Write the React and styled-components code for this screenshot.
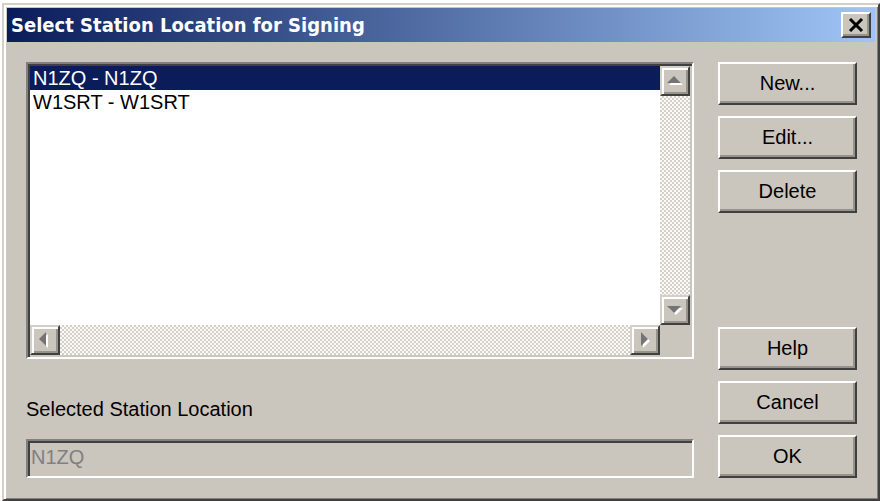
import React, { useState } from "react";
import styled, { createGlobalStyle } from "styled-components";

const Global = createGlobalStyle`
  *, *::before, *::after { box-sizing: border-box; }
  body { margin: 0; background: #fff; }
  button, input { font: inherit; color: inherit; }
`;

const face = "#cac5bd";
const sans = `"Liberation Sans", Arial, sans-serif`;

const Page = styled.div`
  min-height: 100vh;
  padding: 3px 0 0 2px;
  display: flex;
  font-family: ${sans};
  font-size: 20px;
  line-height: 24px;
  color: #000;
`;

const Dialog = styled.main`
  flex: 1;
  display: flex;
  flex-direction: column;
  padding: 3px;
  background: ${face};
  border: 2px solid;
  border-color: #d4d0c8 #404040 #404040 #d4d0c8;
  box-shadow: inset 2px 2px #fff, inset -1px -1px #808080;
`;

const TitleBar = styled.header`
  display: flex;
  align-items: center;
  justify-content: space-between;
  height: 34px;
  padding: 0 4px;
  background: linear-gradient(90deg, #0a1c5a, #9fc5f5);
`;

const Title = styled.h1`
  margin: 0;
  font-family: "DejaVu Sans Condensed", "DejaVu Sans", sans-serif;
  font-size: 20px;
  font-weight: 700;
  line-height: 24px;
  color: #fff;
`;

const Raised = styled.button`
  display: flex;
  align-items: center;
  justify-content: center;
  padding: 0;
  background: ${face};
  border: 2px solid;
  border-color: #fff #404040 #404040 #fff;
  box-shadow: inset -2px -2px #96928c;
`;

const CloseButton = styled(Raised)`
  width: 30px;
  height: 26px;
`;

const PushButton = styled(Raised)`
  height: 43px;
  padding-bottom: 2px;
`;

const Body = styled.div`
  flex: 1;
  display: flex;
  gap: 24px;
  padding: 20px 18px 18px 19px;
`;

const Fields = styled.div`
  flex: 1;
  display: flex;
  flex-direction: column;
`;

const Actions = styled.div`
  width: 139px;
  display: flex;
  flex-direction: column;
  justify-content: space-between;
`;

const ButtonGroup = styled.div`
  display: flex;
  flex-direction: column;
  gap: 11px;
`;

const ListFrame = styled.div`
  flex: 1;
  display: grid;
  grid-template-columns: 1fr 30px;
  grid-template-rows: 1fr 30px;
  padding: 2px;
  background: ${face};
  border: 2px solid;
  border-color: #808080 #fff #fff #808080;
  box-shadow: inset 2px 2px #404040;
`;

const List = styled.ul`
  margin: 0;
  padding: 0;
  list-style: none;
  background: #fff;
`;

const Item = styled.li`
  height: 24px;
  padding-left: 3px;
  cursor: default;
  color: ${(p) => (p.$selected ? "#fff" : "#000")};
  background: ${(p) => (p.$selected ? "#0a1c5a" : "transparent")};
`;

const Track = styled.div`
  display: flex;
  flex-direction: ${(p) => (p.$vertical ? "column" : "row")};
  justify-content: space-between;
  background: repeating-conic-gradient(#fafaf8 0 25%, #d4d0c8 0 50%) 0 0 / 4px 4px;
`;

const ScrollButton = styled(Raised)`
  width: 30px;
  height: 30px;
  border-color: #d4d0c8 #404040 #404040 #d4d0c8;
  box-shadow: inset 2px 2px #fff, inset -2px -2px #96928c;
`;

const Label = styled.label`
  margin-top: 38px;
`;

const TextField = styled.input`
  width: 100%;
  height: 39px;
  margin-top: 18px;
  padding: 0 4px 2px 3px;
  border: 2px solid;
  border-color: #808080 #fff #fff #808080;
  border-radius: 0;
  box-shadow: inset 2px 2px #404040;
  background: ${face};
  color: #808080;
`;

const arrows = {
  up: "M1 11 L8 4 L15 11 Z",
  down: "M1 5 L15 5 L8 12 Z",
  left: "M10 1 L10 15 L3 8 Z",
  right: "M5 1 L12 8 L5 15 Z",
};

function Arrow({ dir }) {
  return (
    <svg width="18" height="18" viewBox="0 0 18 18" aria-hidden="true">
      <path d={arrows[dir]} fill="#fff" transform="translate(2 2)" />
      <path d={arrows[dir]} fill="#747474" />
    </svg>
  );
}

const stations = [
  { call: "N1ZQ", label: "N1ZQ - N1ZQ" },
  { call: "W1SRT", label: "W1SRT - W1SRT" },
];

export default function App() {
  const [selected, setSelected] = useState("N1ZQ");
  return (
    <Page>
      <Global />
      <Dialog>
        <TitleBar>
          <Title>Select Station Location for Signing</Title>
          <CloseButton type="button" aria-label="Close">
            <svg width="16" height="14" viewBox="0 0 16 14" aria-hidden="true">
              <path d="M2 1 L14 13 M14 1 L2 13" stroke="#000" strokeWidth="3" />
            </svg>
          </CloseButton>
        </TitleBar>
        <Body>
          <Fields>
            <ListFrame>
              <List role="listbox" aria-label="Station locations">
                {stations.map((s) => (
                  <Item
                    key={s.call}
                    role="option"
                    aria-selected={s.call === selected}
                    $selected={s.call === selected}
                    onClick={() => setSelected(s.call)}
                  >
                    {s.label}
                  </Item>
                ))}
              </List>
              <Track $vertical>
                <ScrollButton type="button" disabled aria-label="Scroll up"><Arrow dir="up" /></ScrollButton>
                <ScrollButton type="button" disabled aria-label="Scroll down"><Arrow dir="down" /></ScrollButton>
              </Track>
              <Track>
                <ScrollButton type="button" disabled aria-label="Scroll left"><Arrow dir="left" /></ScrollButton>
                <ScrollButton type="button" disabled aria-label="Scroll right"><Arrow dir="right" /></ScrollButton>
              </Track>
            </ListFrame>
            <Label htmlFor="station">Selected Station Location</Label>
            <TextField id="station" type="text" value={selected} disabled readOnly />
          </Fields>
          <Actions>
            <ButtonGroup>
              <PushButton type="button">New...</PushButton>
              <PushButton type="button">Edit...</PushButton>
              <PushButton type="button">Delete</PushButton>
            </ButtonGroup>
            <ButtonGroup>
              <PushButton type="button">Help</PushButton>
              <PushButton type="button">Cancel</PushButton>
              <PushButton type="button">OK</PushButton>
            </ButtonGroup>
          </Actions>
        </Body>
      </Dialog>
    </Page>
  );
}
